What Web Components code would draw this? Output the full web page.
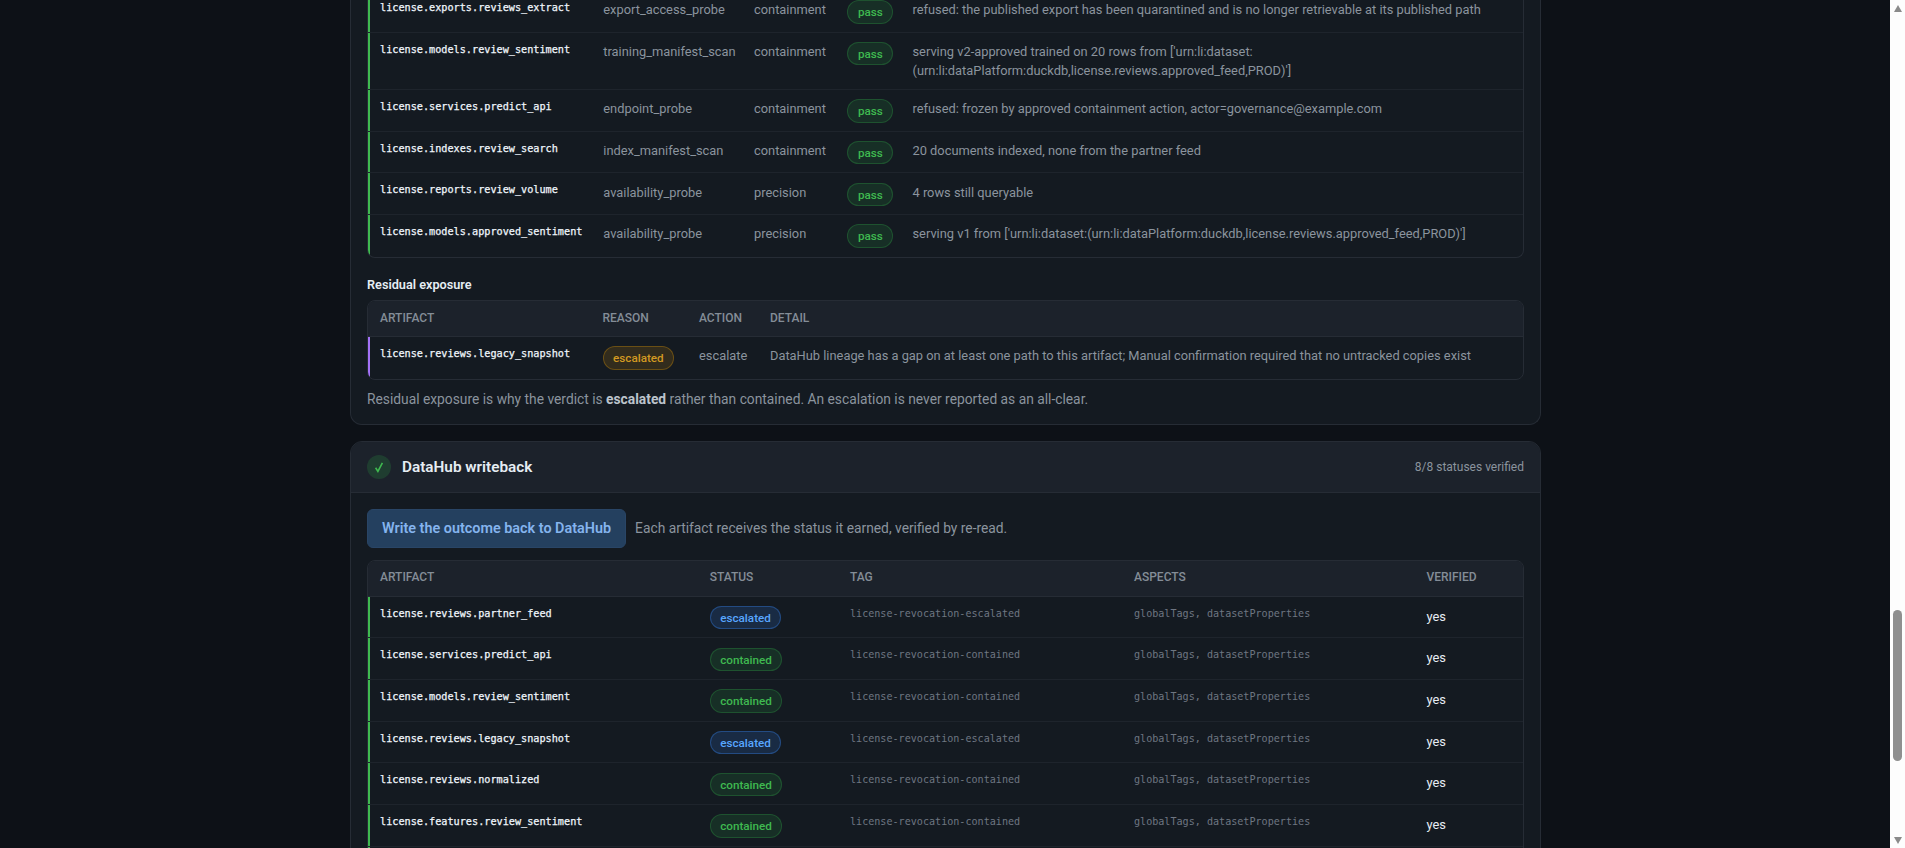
<!doctype html>
<html lang="en">
<head>
<meta charset="utf-8">
<title>DataHub writeback</title>
<style>
  html, body { margin: 0; height: 848px; overflow: hidden; background: #0d1117; }
  body { font-family: Roboto, "Noto Sans", sans-serif; font-size: 12.85px; color: #8b949e; }
</style>
</head>
<body>
<app-shell>
  <panel-card flush>
    <data-table style="--cols:223.3px 150.7px 93.5px 65px 1fr" open-top>
      <t-row stripe="green"><t-cell mono>license.exports.reviews_extract</t-cell><t-cell>export_access_probe</t-cell><t-cell>containment</t-cell><t-cell><status-pill tone="green">pass</status-pill></t-cell><t-cell>refused: the published export has been quarantined and is no longer retrievable at its published path</t-cell></t-row>
      <t-row stripe="green"><t-cell mono>license.models.review_sentiment</t-cell><t-cell>training_manifest_scan</t-cell><t-cell>containment</t-cell><t-cell><status-pill tone="green">pass</status-pill></t-cell><t-cell>serving v2-approved trained on 20 rows from ['urn:li:dataset:<br>(urn:li:dataPlatform:duckdb,license.reviews.approved_feed,PROD)']</t-cell></t-row>
      <t-row stripe="green"><t-cell mono>license.services.predict_api</t-cell><t-cell>endpoint_probe</t-cell><t-cell>containment</t-cell><t-cell><status-pill tone="green">pass</status-pill></t-cell><t-cell>refused: frozen by approved containment action, actor=governance@example.com</t-cell></t-row>
      <t-row stripe="green"><t-cell mono>license.indexes.review_search</t-cell><t-cell>index_manifest_scan</t-cell><t-cell>containment</t-cell><t-cell><status-pill tone="green">pass</status-pill></t-cell><t-cell>20 documents indexed, none from the partner feed</t-cell></t-row>
      <t-row stripe="green"><t-cell mono>license.reports.review_volume</t-cell><t-cell>availability_probe</t-cell><t-cell>precision</t-cell><t-cell><status-pill tone="green">pass</status-pill></t-cell><t-cell>4 rows still queryable</t-cell></t-row>
      <t-row stripe="green"><t-cell mono>license.models.approved_sentiment</t-cell><t-cell>availability_probe</t-cell><t-cell>precision</t-cell><t-cell><status-pill tone="green">pass</status-pill></t-cell><t-cell>serving v1 from ['urn:li:dataset:(urn:li:dataPlatform:duckdb,license.reviews.approved_feed,PROD)']</t-cell></t-row>
    </data-table>
    <section-label>Residual exposure</section-label>
    <data-table style="--cols:222.5px 96.5px 71px 1fr">
      <t-row head><t-cell>Artifact</t-cell><t-cell>Reason</t-cell><t-cell>Action</t-cell><t-cell>Detail</t-cell></t-row>
      <t-row stripe="purple"><t-cell mono>license.reviews.legacy_snapshot</t-cell><t-cell><status-pill tone="amber">escalated</status-pill></t-cell><t-cell>escalate</t-cell><t-cell>DataHub lineage has a gap on at least one path to this artifact; Manual confirmation required that no untracked copies exist</t-cell></t-row>
    </data-table>
    <foot-note>Residual exposure is why the verdict is <b>escalated</b> rather than contained. An escalation is never reported as an all-clear.</foot-note>
  </panel-card>

  <panel-card>
    <check-badge slot="icon"></check-badge>
    <span slot="title">DataHub writeback</span>
    <span slot="meta">8/8 statuses verified</span>
    <action-row>
      <action-button>Write the outcome back to DataHub</action-button>
      Each artifact receives the status it earned, verified by re-read.
    </action-row>
    <data-table style="--cols:329.7px 140.3px 284px 292.5px 1fr">
      <t-row head><t-cell>Artifact</t-cell><t-cell>Status</t-cell><t-cell>Tag</t-cell><t-cell>Aspects</t-cell><t-cell>Verified</t-cell></t-row>
      <t-row stripe="green"><t-cell mono>license.reviews.partner_feed</t-cell><t-cell><status-pill tone="blue">escalated</status-pill></t-cell><t-cell dim>license-revocation-escalated</t-cell><t-cell dim>globalTags, datasetProperties</t-cell><t-cell bright>yes</t-cell></t-row>
      <t-row stripe="green"><t-cell mono>license.services.predict_api</t-cell><t-cell><status-pill tone="green">contained</status-pill></t-cell><t-cell dim>license-revocation-contained</t-cell><t-cell dim>globalTags, datasetProperties</t-cell><t-cell bright>yes</t-cell></t-row>
      <t-row stripe="green"><t-cell mono>license.models.review_sentiment</t-cell><t-cell><status-pill tone="green">contained</status-pill></t-cell><t-cell dim>license-revocation-contained</t-cell><t-cell dim>globalTags, datasetProperties</t-cell><t-cell bright>yes</t-cell></t-row>
      <t-row stripe="green"><t-cell mono>license.reviews.legacy_snapshot</t-cell><t-cell><status-pill tone="blue">escalated</status-pill></t-cell><t-cell dim>license-revocation-escalated</t-cell><t-cell dim>globalTags, datasetProperties</t-cell><t-cell bright>yes</t-cell></t-row>
      <t-row stripe="green"><t-cell mono>license.reviews.normalized</t-cell><t-cell><status-pill tone="green">contained</status-pill></t-cell><t-cell dim>license-revocation-contained</t-cell><t-cell dim>globalTags, datasetProperties</t-cell><t-cell bright>yes</t-cell></t-row>
      <t-row stripe="green"><t-cell mono>license.features.review_sentiment</t-cell><t-cell><status-pill tone="green">contained</status-pill></t-cell><t-cell dim>license-revocation-contained</t-cell><t-cell dim>globalTags, datasetProperties</t-cell><t-cell bright>yes</t-cell></t-row>
      <t-row stripe="green" style="height:42px"></t-row>
    </data-table>
  </panel-card>
</app-shell>

<script>
// helper: small elements that are only a <style> and a <slot>
function defineSimple(name, css, html = '<slot></slot>') {
  customElements.define(name, class extends HTMLElement {
    constructor() {
      super();
      this.attachShadow({ mode: 'open' }).innerHTML = `<style>${css}</style>${html}`;
    }
  });
}

// page frame: the column is scrolled, so its top is cut off by the window
defineSimple('app-shell', `
  :host { display: flex; height: 848px; overflow: hidden; }
  .page { flex: 1; min-width: 0; overflow: hidden; }
  .column { width: 1191px; margin: -9px 0 0 350px; display: flex; flex-direction: column; gap: 16px; }
  .bar { flex: 0 0 15px; background: #fdfdfd; display: flex; flex-direction: column; align-items: center; padding: 5px 0 4px; box-sizing: border-box; }
  .thumb { width: 9px; height: 151px; margin-top: 598px; border-radius: 5px; background: #8f8f8f; }
  .up, .down { width: 0; height: 0; border: 4.5px solid transparent; }
  .up { border-bottom: 7px solid #8a8a8a; border-top: 0; }
  .down { margin-top: auto; border-top: 7px solid #8a8a8a; border-bottom: 0; }
`, `<div class="page"><div class="column"><slot></slot></div></div><div class="bar"><div class="up"></div><div class="thumb"></div><div class="down"></div></div>`);

defineSimple('panel-card', `
  :host { display: block; background: #141a21; border: 1px solid #262c35; border-radius: 12px; overflow: hidden; }
  :host([flush]) { border-top: 0; border-radius: 0 0 12px 12px; }
  header { display: flex; align-items: center; gap: 11px; height: 50px; padding: 0 16px; background: #1c222b; border-bottom: 1px solid #262c35; }
  :host([flush]) header { display: none; }
  .title { font-size: 15.3px; font-weight: 600; color: #e6edf3; }
  .meta { margin-left: auto; font-size: 12px; color: #8b949e; }
  .body { padding: 0 16px 15px; }
  :host(:not([flush])) .body { padding-top: 16px; }
`, `<header><slot name="icon"></slot><span class="title"><slot name="title"></slot></span><span class="meta"><slot name="meta"></slot></span></header><div class="body"><slot></slot></div>`);

defineSimple('check-badge', `
  :host { display: flex; align-items: center; justify-content: center; width: 24px; height: 24px; border-radius: 50%; background: rgba(46,160,67,.22); }
  svg { width: 12px; height: 12px; fill: none; stroke: #3fb950; stroke-width: 1.6; }
`, `<svg viewBox="0 0 12 12"><path d="M2.6 6.8 4.9 10.4 9.4 1.8"/></svg>`);

defineSimple('section-label', `
  :host { display: block; margin: 17px 0 5px; font-size: 12.7px; font-weight: 600; line-height: 20px; color: #e6edf3; }
`);

defineSimple('foot-note', `
  :host { display: block; margin-top: 9px; font-size: 13.8px; line-height: 20px; color: #8b949e; }
  ::slotted(b) { color: #bcc4cc; font-weight: 700; }
`);

defineSimple('action-row', `
  :host { display: flex; align-items: center; gap: 9px; margin-bottom: 12px; font-size: 13.8px; color: #8b949e; }
`);

defineSimple('action-button', `
  :host { display: block; padding: 0 14px; line-height: 37px; border: 1px solid #294566; border-radius: 6px; background: #24405f; color: #85b4ee; font-size: 14.4px; font-weight: 600; }
`);

defineSimple('data-table', `
  :host { display: block; border: 1px solid #262c35; border-radius: 8px; overflow: hidden; }
  :host([open-top]) { border-top: 0; border-top-left-radius: 0; border-top-right-radius: 0; }
`);

// a row; its children sit in the grid given by --cols on the table
defineSimple('t-row', `
  :host { display: grid; grid-template-columns: var(--cols); border-bottom: 1px solid #1e242c; box-sizing: border-box; }
  :host(:last-child) { border-bottom-color: transparent; }
  :host([head]) { background: #1c222b; border-bottom-color: #262c35; font-size: 12px; font-weight: 500; text-transform: uppercase; color: #848d97; height: 36px; align-items: center; }
  :host([head]) ::slotted(t-cell) { padding: 0 12px; }
  :host([stripe="green"]) { box-shadow: inset 2px 0 0 #3fb950; }
  :host([stripe="purple"]) { box-shadow: inset 2px 0 0 #a371f7; }
`);

defineSimple('t-cell', `
  :host { display: block; padding: 9.2px 12px 8.1px; font-size: inherit; line-height: 19.5px; min-width: 0; }
  :host([mono]) { padding: 9px 12px; font: 10.2px/15px "DejaVu Sans Mono", monospace; -webkit-text-stroke: .25px #f0f6fc; color: #f0f6fc; }
  :host([dim]) { padding: 9px 12px; font: 10.1px/15px "DejaVu Sans Mono", monospace; color: #6e7681; }
  :host([bright]) { color: #e6edf3; padding-top: 10px; }
`);

class StatusPill extends HTMLElement {
  static TONES = {
    green: ['#3fb950', 'rgba(46,160,67,.16)', 'rgba(46,160,67,.32)'],
    blue:  ['#58a6ff', 'rgba(56,139,253,.16)', 'rgba(56,139,253,.34)'],
    amber: ['#d29922', 'rgba(187,128,9,.18)', 'rgba(187,128,9,.42)'],
  };

  connectedCallback() {
    const [fg, bg, line] = StatusPill.TONES[this.getAttribute('tone')] ?? StatusPill.TONES.green;
    if (this.shadowRoot) return;
    this.attachShadow({ mode: 'open' }).innerHTML = `
      <style>
        :host { display: inline-block; padding: 0 9.5px; height: 23.45px; box-sizing: border-box;
                border: 1px solid ${line}; border-radius: 999px; background: ${bg}; color: ${fg};
                font-size: 11.7px; font-weight: 500; vertical-align: top; }
        span { display: block; line-height: 22px; }
      </style>
      <span><slot></slot></span>`;
  }
}
customElements.define('status-pill', StatusPill);
</script>
</body>
</html>
